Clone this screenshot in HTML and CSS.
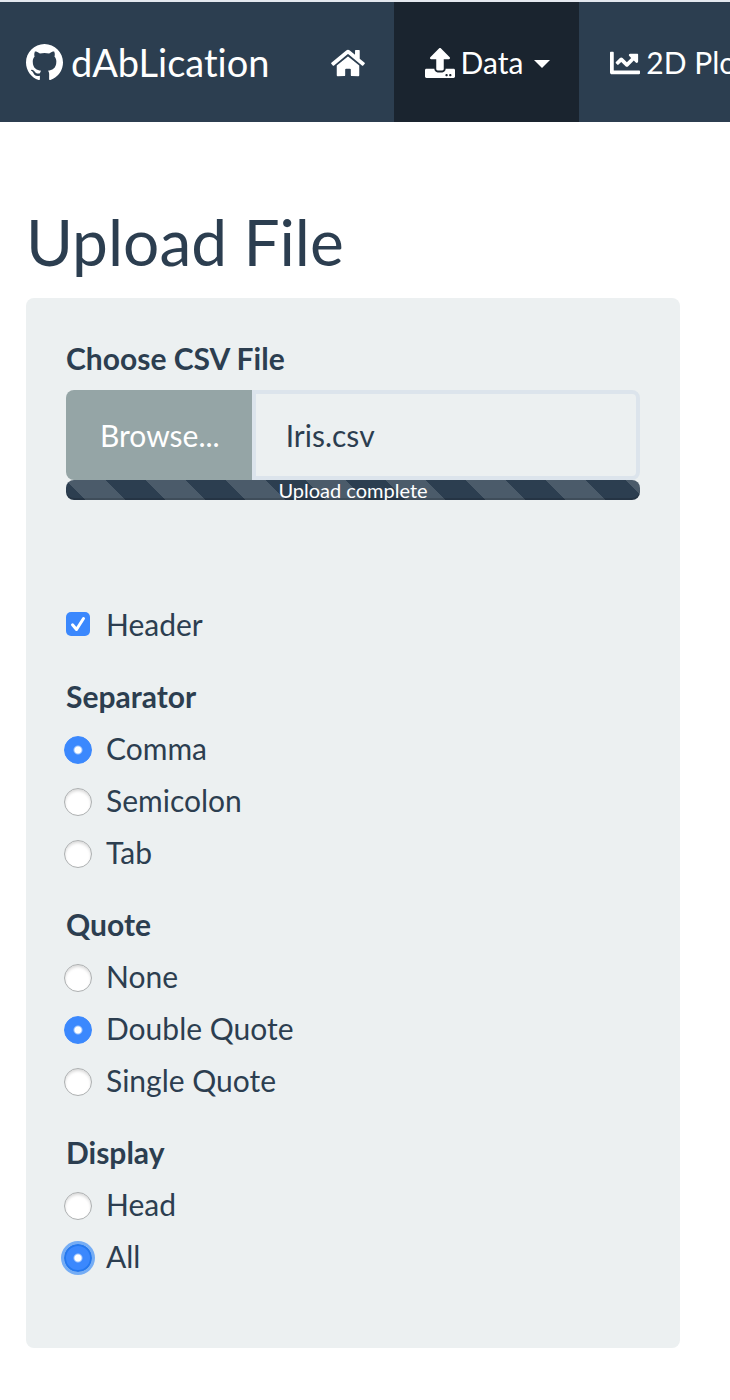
FILE: index.html
```html
<!DOCTYPE html>
<html lang="en">
<head>
<meta charset="utf-8">
<meta name="viewport" content="width=device-width, initial-scale=1">
<title>dAbLication</title>
<link rel="stylesheet" href="styles.css">
</head>
<body>
<nav class="navbar">
  <a class="brand" href="#">
    <svg class="icon-github" viewBox="0 0 16 16" aria-hidden="true"><path d="M8 0C3.58 0 0 3.58 0 8c0 3.54 2.29 6.53 5.47 7.59.4.07.55-.17.55-.38 0-.19-.01-.82-.01-1.49-2.01.37-2.53-.49-2.69-.94-.09-.23-.48-.94-.82-1.13-.28-.15-.68-.52-.01-.53.63-.01 1.08.58 1.23.82.72 1.21 1.87.87 2.33.66.07-.52.28-.87.51-1.07-1.78-.2-3.64-.89-3.64-3.95 0-.87.31-1.59.82-2.15-.08-.2-.36-1.02.08-2.12 0 0 .67-.21 2.2.82.64-.18 1.32-.27 2-.27s1.36.09 2 .27c1.53-1.04 2.2-.82 2.2-.82.44 1.1.16 1.92.08 2.12.51.56.82 1.27.82 2.15 0 3.07-1.87 3.75-3.65 3.95.29.25.54.73.54 1.48 0 1.07-.01 1.93-.01 2.2 0 .21.15.46.55.38A8.01 8.01 0 0 0 16 8c0-4.42-3.58-8-8-8z"/></svg>
    <span>dAbLication</span>
  </a>
  <a class="nav-link" href="#" aria-label="Home">
    <svg class="icon-home" viewBox="0 0 576 512" aria-hidden="true"><path d="M280.37 148.26L96 300.11V464a16 16 0 0 0 16 16l112.06-.29a16 16 0 0 0 15.92-16V368a16 16 0 0 1 16-16h64a16 16 0 0 1 16 16v95.64a16 16 0 0 0 16 16.05L464 480a16 16 0 0 0 16-16V300L295.67 148.26a12.19 12.19 0 0 0-15.3 0zM571.6 251.47L488 182.56V44.05a12 12 0 0 0-12-12h-56a12 12 0 0 0-12 12v72.61L318.47 43a48 48 0 0 0-61 0L4.34 251.47a12 12 0 0 0-1.6 16.9l25.5 31A12 12 0 0 0 45.15 301l235.22-193.74a12.19 12.19 0 0 1 15.3 0L530.9 301a12 12 0 0 0 16.9-1.6l25.5-31a12 12 0 0 0-1.7-16.93z"/></svg>
  </a>
  <a class="nav-link active" href="#">
    <svg class="icon" viewBox="0 0 512 512" aria-hidden="true"><path d="M296 384h-80c-13.3 0-24-10.7-24-24V192h-87.7c-17.8 0-26.7-21.5-14.1-34.1L242.3 5.7c7.5-7.5 19.8-7.5 27.3 0l152.2 152.2c12.6 12.6 3.7 34.1-14.1 34.1H320v168c0 13.3-10.7 24-24 24zm216-8v112c0 13.3-10.7 24-24 24H24c-13.3 0-24-10.7-24-24V376c0-13.3 10.7-24 24-24h136v8c0 30.9 25.1 56 56 56h80c30.9 0 56-25.1 56-56v-8h136c13.3 0 24 10.7 24 24zm-124 88c0-11-9-20-20-20s-20 9-20 20 9 20 20 20 20-9 20-20zm64 0c0-11-9-20-20-20s-20 9-20 20 9 20 20 20 20-9 20-20z"/></svg>
    <span>Data</span>
    <span class="caret"></span>
  </a>
  <a class="nav-link" href="#">
    <svg class="icon" viewBox="0 0 512 512" aria-hidden="true"><path d="M496 384H64V80c0-8.84-7.16-16-16-16H16C7.16 64 0 71.16 0 80v336c0 17.67 14.33 32 32 32h464c8.84 0 16-7.16 16-16v-32c0-8.84-7.16-16-16-16zM464 96H345.94c-21.38 0-32.09 25.85-16.97 40.97l32.4 32.4L288 242.75l-73.37-73.37c-12.5-12.5-32.76-12.5-45.25 0l-68.69 68.69c-6.25 6.25-6.25 16.38 0 22.63l22.62 22.62c6.25 6.25 16.38 6.25 22.63 0L192 237.25l73.37 73.37c12.5 12.5 32.76 12.5 45.25 0l96-96 32.4 32.4c15.12 15.12 40.97 4.41 40.97-16.97V112c.01-8.84-7.15-16-15.99-16z"/></svg>
    <span>2D Plots</span>
  </a>
</nav>
<main class="page">
  <h1 class="title">Upload File</h1>
  <form class="well">
    <label class="group-title" for="file">Choose CSV File</label>
    <div class="file-row">
      <label class="browse">Browse...<input class="file-input" id="file" type="file" accept=".csv"></label>
      <input class="file-name" type="text" value="Iris.csv" readonly aria-label="Selected file">
    </div>
    <div class="progress" role="progressbar" aria-label="Upload" aria-valuenow="100">Upload complete</div>

    <label class="option header-option"><input class="check" type="checkbox" checked><span>Header</span></label>

    <fieldset class="group">
      <legend class="group-title">Separator</legend>
      <label class="option"><input class="radio" type="radio" name="sep" checked><span>Comma</span></label>
      <label class="option"><input class="radio" type="radio" name="sep"><span>Semicolon</span></label>
      <label class="option"><input class="radio" type="radio" name="sep"><span>Tab</span></label>
    </fieldset>
    <fieldset class="group">
      <legend class="group-title">Quote</legend>
      <label class="option"><input class="radio" type="radio" name="quote"><span>None</span></label>
      <label class="option"><input class="radio" type="radio" name="quote" checked><span>Double Quote</span></label>
      <label class="option"><input class="radio" type="radio" name="quote"><span>Single Quote</span></label>
    </fieldset>
    <fieldset class="group">
      <legend class="group-title">Display</legend>
      <label class="option"><input class="radio" type="radio" name="disp"><span>Head</span></label>
      <label class="option"><input class="radio focused" type="radio" name="disp" checked><span>All</span></label>
    </fieldset>
  </form>
</main>
</body>
</html>
```
FILE: styles.css
```css
* { box-sizing: border-box; }

body {
  margin: 0;
  background: #fff;
  color: #2c3e50;
  font-family: Lato, "Liberation Sans", sans-serif;
  font-size: 30px;
  font-variant-ligatures: none;
  line-height: 40px;
  overflow-x: hidden;
}

.navbar {
  display: flex;
  height: 122px;
  border-top: 2px solid #e4e8ef;
  background: #2c3e50;
  overflow: hidden;
}

.brand,
.nav-link {
  display: flex;
  flex: none;
  align-items: center;
  gap: 6px;
  color: #fff;
  text-decoration: none;
  white-space: nowrap;
}

.brand { padding: 0 30px 0 26px; font-size: 38px; gap: 8px; }
.nav-link { padding: 0 29px 0 31px; }
.active { background: #1a242f; }

.navbar svg { fill: currentColor; flex: none; }
.icon-github { width: 37px; height: 37px; }
.icon-home { width: 34px; height: 30px; }
.icon { width: 30px; height: 30px; }

.nav-link svg { margin-top: 2px; }

.caret {
  margin: 4px 0 0 5px;
  border: 8px solid transparent;
  border-top-color: #fff;
  border-bottom: 0;
}

.page { padding: 85px 50px 52px 26px; }

.title {
  margin: 0 0 21px;
  font-size: 64px;
  font-weight: 400;
  line-height: 70px;
}

.well {
  padding: 40px 40px 70px;
  border-radius: 8px;
  background: #ecf0f1;
}

.group-title {
  display: block;
  padding: 0 0 2px;
  font-weight: 700;
}

.file-row {
  display: flex;
  height: 90px;
  margin-top: 10px;
}

.browse {
  display: flex;
  align-items: center;
  padding: 0 32px 0 34px;
  border-radius: 8px 0 0 8px;
  background: #95a5a6;
  color: #fff;
}

.file-input {
  position: absolute;
  width: 1px;
  height: 1px;
  opacity: 0;
}

.file-name {
  flex: 1;
  min-width: 0;
  padding: 0 30px;
  border: 4px solid #dce4ec;
  border-radius: 0 8px 8px 0;
  background: #ecf0f1;
  color: inherit;
  font: inherit;
}

.progress {
  height: 20px;
  border-radius: 8px;
  background: #2c3e50 linear-gradient(45deg, rgba(255, 255, 255, .15) 25%, transparent 25%, transparent 50%, rgba(255, 255, 255, .15) 50%, rgba(255, 255, 255, .15) 75%, transparent 75%) 0 0 / 80px 80px;
  box-shadow: inset 0 -2px 0 rgba(0, 0, 0, .15);
  color: #fff;
  font-size: 20px;
  line-height: 20px;
  text-align: center;
  overflow: hidden;
}

.option {
  display: flex;
  align-items: center;
  margin-top: 10px;
}

.option span { padding-bottom: 2px; }

.header-option { margin-top: 104px; }

.group {
  min-width: 0;
  margin: 30px 0 0;
  padding: 0;
  border: 0;
}

.check,
.radio {
  appearance: none;
  flex: none;
  background: #fff;
}

.check {
  width: 24px;
  height: 24px;
  margin: 0 16px 2px 0;
  border-radius: 5px;
}

.check:checked {
  background: #3b88fd url("data:image/svg+xml,%3Csvg xmlns='http://www.w3.org/2000/svg' viewBox='0 0 24 24'%3E%3Cpath d='M6.5 12.8l4 4.7L17.5 6.5' fill='none' stroke='white' stroke-width='3' stroke-linecap='round' stroke-linejoin='round'/%3E%3C/svg%3E");
}

.radio {
  width: 28px;
  height: 28px;
  margin: 2px 14px 0 -2px;
  border: 1px solid #adb0b1;
  border-radius: 50%;
  box-shadow: inset 0 2px 3px rgba(0, 0, 0, .15);
}

.radio:checked {
  border-color: #3b88fd;
  background: radial-gradient(circle, #fff 3px, #3b88fd 5px);
  box-shadow: none;
}

.radio.focused {
  border: 2px solid #2478ee;
  box-shadow: 0 0 0 3px #75adf5;
}
```
